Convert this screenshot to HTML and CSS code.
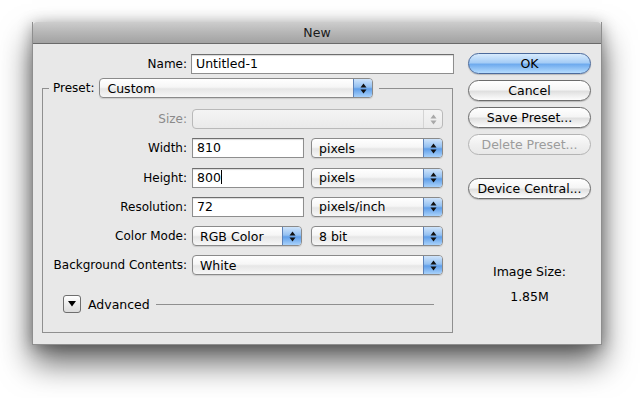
FILE: index.html
```html
<!DOCTYPE html>
<html lang="en">
<head>
    <meta charset="UTF-8">
    <title>New</title>
    <link rel="stylesheet" href="styles.css">
</head>
<body>
    <div class="dialog">
        <div class="titlebar">New</div>
        <div class="content">
            <div class="main">
                <div class="name-row">
                    <label>Name:</label>
                    <div class="field name-field">Untitled-1</div>
                </div>
                <fieldset class="preset-group">
                    <legend>
                        <span class="legend-label">Preset:</span>
                        <div class="select preset-select">
                            <span>Custom</span>
                            <span class="arrows"><svg width="7" height="11" viewBox="0 0 7 11"><polygon points="0.5,4.5 3.5,0.5 6.5,4.5"/><polygon points="0.5,6.5 3.5,10.5 6.5,6.5"/></svg></span>
                        </div>
                    </legend>

                    <div class="rows">
                        <label class="muted">Size:</label>
                        <div class="controls">
                            <div class="select disabled wide">
                                <span></span>
                                <span class="arrows"><svg width="7" height="11" viewBox="0 0 7 11"><polygon points="0.5,4.5 3.5,0.5 6.5,4.5"/><polygon points="0.5,6.5 3.5,10.5 6.5,6.5"/></svg></span>
                            </div>
                        </div>

                        <label>Width:</label>
                        <div class="controls">
                            <div class="field num">810</div>
                            <div class="select unit">
                                <span>pixels</span>
                                <span class="arrows"><svg width="7" height="11" viewBox="0 0 7 11"><polygon points="0.5,4.5 3.5,0.5 6.5,4.5"/><polygon points="0.5,6.5 3.5,10.5 6.5,6.5"/></svg></span>
                            </div>
                        </div>

                        <label>Height:</label>
                        <div class="controls">
                            <div class="field num">800<span class="caret"></span></div>
                            <div class="select unit">
                                <span>pixels</span>
                                <span class="arrows"><svg width="7" height="11" viewBox="0 0 7 11"><polygon points="0.5,4.5 3.5,0.5 6.5,4.5"/><polygon points="0.5,6.5 3.5,10.5 6.5,6.5"/></svg></span>
                            </div>
                        </div>

                        <label>Resolution:</label>
                        <div class="controls">
                            <div class="field num">72</div>
                            <div class="select unit">
                                <span>pixels/inch</span>
                                <span class="arrows"><svg width="7" height="11" viewBox="0 0 7 11"><polygon points="0.5,4.5 3.5,0.5 6.5,4.5"/><polygon points="0.5,6.5 3.5,10.5 6.5,6.5"/></svg></span>
                            </div>
                        </div>

                        <label>Color Mode:</label>
                        <div class="controls">
                            <div class="select mode">
                                <span>RGB Color</span>
                                <span class="arrows"><svg width="7" height="11" viewBox="0 0 7 11"><polygon points="0.5,4.5 3.5,0.5 6.5,4.5"/><polygon points="0.5,6.5 3.5,10.5 6.5,6.5"/></svg></span>
                            </div>
                            <div class="select unit">
                                <span>8 bit</span>
                                <span class="arrows"><svg width="7" height="11" viewBox="0 0 7 11"><polygon points="0.5,4.5 3.5,0.5 6.5,4.5"/><polygon points="0.5,6.5 3.5,10.5 6.5,6.5"/></svg></span>
                            </div>
                        </div>

                        <label>Background Contents:</label>
                        <div class="controls">
                            <div class="select wide">
                                <span>White</span>
                                <span class="arrows"><svg width="7" height="11" viewBox="0 0 7 11"><polygon points="0.5,4.5 3.5,0.5 6.5,4.5"/><polygon points="0.5,6.5 3.5,10.5 6.5,6.5"/></svg></span>
                            </div>
                        </div>
                    </div>

                    <div class="advanced">
                        <div class="disclosure"><svg width="8" height="6" viewBox="0 0 8 6"><polygon points="0,0 8,0 4,5.5"/></svg></div>
                        <span>Advanced</span>
                        <div class="rule"></div>
                    </div>
                </fieldset>
            </div>

            <div class="side">
                <div class="btn default">OK</div>
                <div class="btn">Cancel</div>
                <div class="btn">Save Preset...</div>
                <div class="btn off">Delete Preset...</div>
                <div class="btn central">Device Central...</div>
                <div class="image-size">
                    <div>Image Size:</div>
                    <div>1.85M</div>
                </div>
            </div>
        </div>
    </div>
</body>
</html>
```

FILE: styles.css
```css
* { margin: 0; padding: 0; box-sizing: border-box; }
html, body { background: #fff; }
body { min-height: 398px; padding: 22px 0 0 32px; font-family: 'DejaVu Sans', 'Liberation Sans', sans-serif; font-size: 12px; color: #000; }

.dialog { width: 570px; background: #e8e8e8; border: 1px solid #8e8e8e; border-top: none; box-shadow: 0 18px 30px rgba(0, 0, 0, 0.6), 0 2px 14px rgba(0, 0, 0, 0.3); }
.titlebar { height: 22px; line-height: 21px; text-align: center; font-size: 12.5px; color: #1a1a1a; background: linear-gradient(#cdcdcd, #b6b6b6 50%, #a2a2a2); border-bottom: 1px solid #6a6a6a; border-radius: 4px 4px 0 0; }

.content { display: flex; padding: 10px 10px 11px 9px; }
.main { width: 412px; }

.name-row { display: flex; align-items: center; height: 20px; }
.name-row label { width: 145px; text-align: right; margin-right: 4px; }
.field { height: 20px; background: #fff; border: 1px solid #8e8e8e; border-top-color: #6e6e6e; box-shadow: inset 0 1px 1px rgba(0, 0, 0, 0.15); padding-left: 4px; line-height: 18px; font-size: 12.5px; }
.name-field { width: 263px; }
.caret { display: inline-block; width: 1px; height: 14px; background: #000; vertical-align: -2px; }

.preset-group { margin-top: 4px; width: 411px; border: 1px solid #8f8f8f; padding: 11px 9px 19px 6px; }
.preset-group legend { display: flex; align-items: center; padding: 0 6px 0 4px; }
.legend-label { margin-right: 5px; }
.preset-select { width: 274px; }

.select { display: flex; align-items: center; height: 20px; border: 1px solid #8a8a8a; border-radius: 4px; background: linear-gradient(#ffffff, #f6f6f6 45%, #e6e6e6 55%, #f7f7f7); box-shadow: 0 1px 1px rgba(0, 0, 0, 0.12); padding-left: 7px; font-size: 12.5px; overflow: hidden; }
.arrows { margin-left: auto; width: 19px; height: 100%; display: flex; align-items: center; justify-content: center; background: linear-gradient(#cfe4fb, #93c0f1 45%, #5f9ee9 55%, #a9d2fb); border-left: 1px solid #5d82b8; }
.arrows svg { fill: #111; }
.select.disabled { border-color: #b9b9b9; background: linear-gradient(#f4f4f4, #eaeaea); box-shadow: none; }
.select.disabled .arrows { background: transparent; border-left-color: #d4d4d4; }
.select.disabled .arrows svg { fill: #a8a8a8; }

.rows { display: grid; grid-template-columns: 138px 251px; column-gap: 5px; row-gap: 9.25px; align-items: center; }
.rows label { text-align: right; white-space: nowrap; }
.rows label.muted { color: #8a8a8a; }
.controls { display: flex; justify-content: space-between; }
.wide { width: 251px; }
.num { width: 112px; }
.unit { width: 132px; }
.mode { width: 110px; }

.advanced { display: flex; align-items: center; margin: 20px 9px 0 14px; height: 18px; }
.disclosure { width: 18px; height: 18px; border: 1px solid #6e6e6e; border-radius: 3px; background: linear-gradient(#ffffff, #ececec 50%, #dcdcdc); display: flex; align-items: center; justify-content: center; margin-right: 7px; }
.advanced span { font-size: 12.5px; }
.rule { flex: 1; height: 1px; background: #8f8f8f; margin-left: 6px; }

.side { width: 125px; margin-left: 14px; margin-top: -1px; display: flex; flex-direction: column; }
.btn { height: 21px; border: 1px solid #6c6c6c; border-radius: 11px; background: linear-gradient(#ffffff, #f5f5f5 45%, #e0e0e0 55%, #fdfdfd); box-shadow: 0 1px 1px rgba(0, 0, 0, 0.2); text-align: center; line-height: 19px; font-size: 12.5px; margin-bottom: 6px; }
.btn.default { border-color: #4b6a9c; background: linear-gradient(#d8ebfd, #a6cdf6 45%, #6fabee 55%, #b5dcfe); }
.btn.off { color: #9c9c9c; border-color: #b4b4b4; background: linear-gradient(#fbfbfb, #f0f0f0 50%, #e8e8e8); box-shadow: none; }
.btn.central { margin-top: 17px; }
.image-size { margin-top: 54px; text-align: center; line-height: 25px; font-size: 12.5px; }
```
